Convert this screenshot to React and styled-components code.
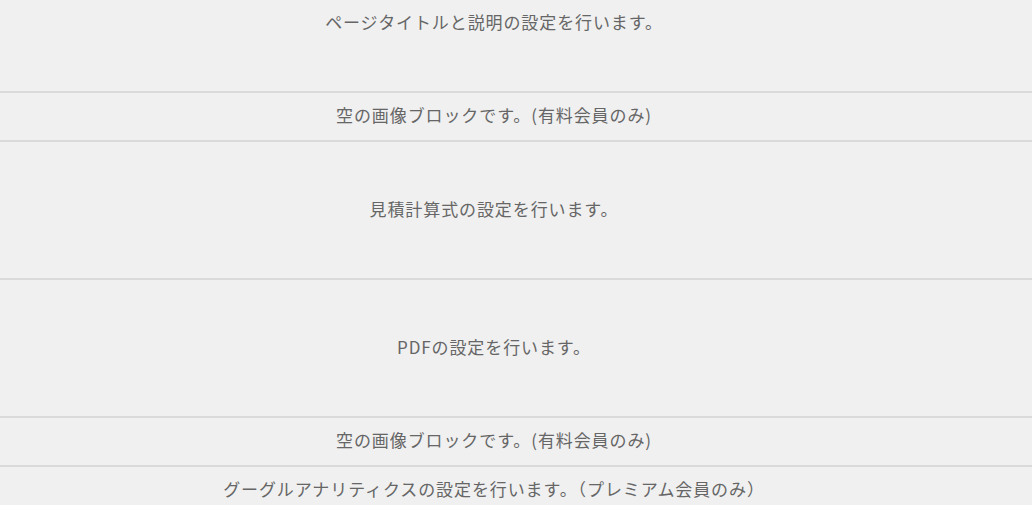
import React from "react";
import styled, { createGlobalStyle } from "styled-components";

const GlobalStyle = createGlobalStyle`
  html, body {
    margin: 0;
    padding: 0;
    background-color: #f0f0f0;
    overflow: hidden;
  }
  body {
    font-family: "Noto Sans CJK JP", "Noto Sans", sans-serif;
    color: #666;
  }
`;

const Page = styled.div`
  height: 505px;
  overflow: hidden;
`;

// the page is scrolled down a little, the first block is cut at the top
const BlockList = styled.div`
  display: flex;
  flex-direction: column;
  margin-top: -45px;
`;

const Block = styled.div`
  display: flex;
  align-items: center;
  justify-content: center;
  box-sizing: border-box;
  height: ${(props) => (props.$tall ? "138px" : "49px")};
  padding: 0 44px 4px 0;
  border-bottom: 2px solid #dadada;
  font-size: 17px;
  line-height: 1;
  letter-spacing: 0.9px;
`;

const blocks = [
  { text: "ページタイトルと説明の設定を行います。", tall: true },
  { text: "空の画像ブロックです。(有料会員のみ)", tall: false },
  { text: "見積計算式の設定を行います。", tall: true },
  { text: "PDFの設定を行います。", tall: true },
  { text: "空の画像ブロックです。(有料会員のみ)", tall: false },
  {
    text: "グーグルアナリティクスの設定を行います。（プレミアム会員のみ）",
    tall: false,
  },
];

function App() {
  return (
    <Page>
      <GlobalStyle />
      <BlockList>
        {blocks.map((block, index) => (
          <Block key={index} $tall={block.tall}>
            {block.text}
          </Block>
        ))}
      </BlockList>
    </Page>
  );
}
export default App;
